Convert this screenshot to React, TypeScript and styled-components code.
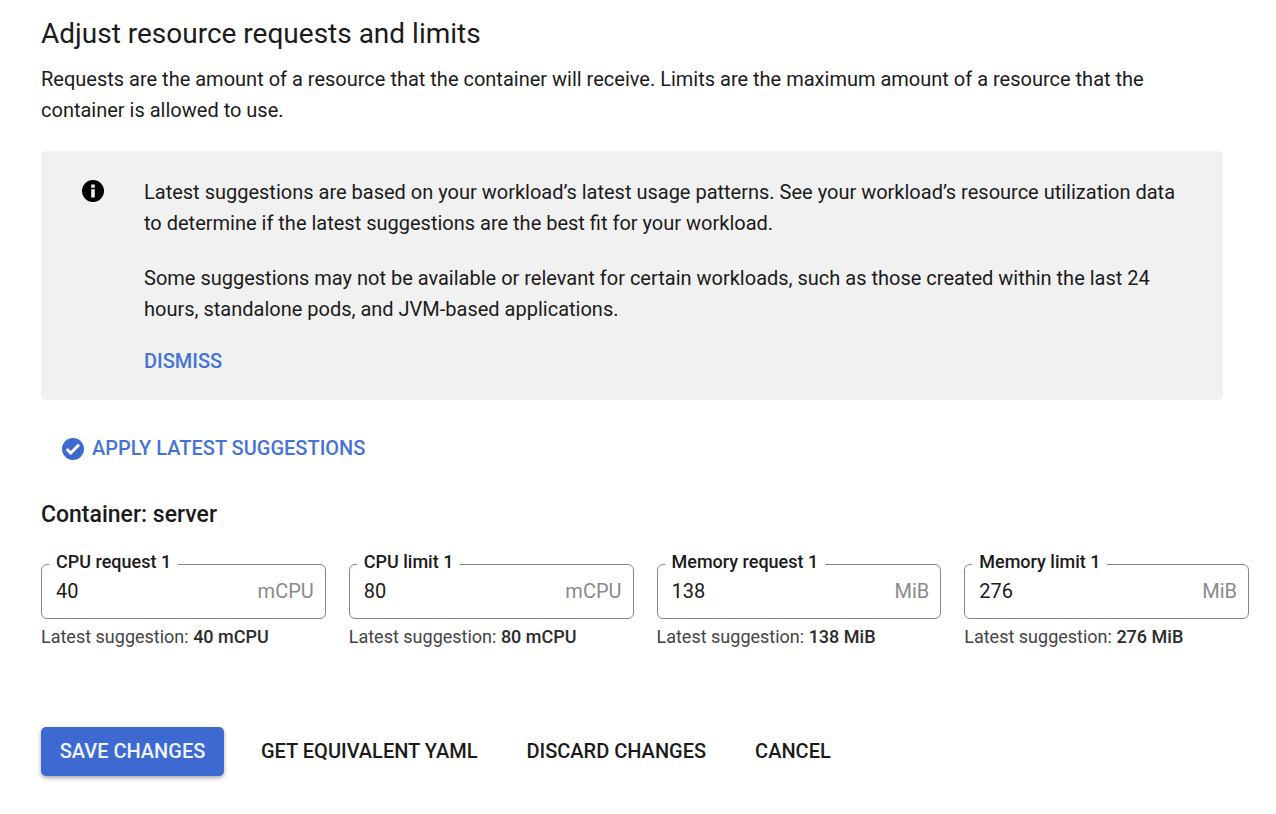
import React, { useId } from "react";
import styled, { createGlobalStyle } from "styled-components";

const GlobalStyle = createGlobalStyle`
  *, *::before, *::after { box-sizing: border-box; }
  body {
    margin: 0;
    background: #ffffff;
    color: #1b1b1b;
    font-family: Roboto, "Liberation Sans", sans-serif;
    font-size: 20px;
    line-height: 31px;
  }
`;

const blue = "#3d69d0";

const Page = styled.main`
  padding: 16px 27px 38px 41px;
`;

const Intro = styled.section`
  padding-right: 26px;
`;

const Title = styled.h1`
  margin: 0 0 12px;
  font-size: 28px;
  font-weight: 400;
  line-height: 36px;
`;

const Description = styled.p`
  margin: 0;
`;

const Notice = styled.aside`
  display: flex;
  align-items: flex-start;
  margin-top: 25px;
  padding: 26px 41px 23px;
  border-radius: 5px;
  background: #f1f1f1;
`;

const NoticeIcon = styled.svg`
  flex: none;
  width: 22px;
  height: 22px;
  margin: 3px 40px 0 0;
`;

const NoticeBody = styled.div`
  flex: 1;
`;

const NoticeText = styled.p`
  margin: 0 0 24px;

  &:last-of-type {
    margin-bottom: 21px;
  }
`;

const TextButton = styled.button<{ $primary?: boolean }>`
  display: inline-flex;
  align-items: center;
  gap: 8px;
  padding: 0;
  border: 0;
  background: none;
  color: ${(p) => (p.$primary ? "#4673d6" : "#1b1b1b")};
  font: inherit;
  font-weight: 500;
  cursor: pointer;
`;

const ApplyRow = styled.div`
  display: flex;
  margin: 33px 0 0 21px;
`;

const CheckIcon = styled.svg`
  width: 22px;
  height: 22px;
`;

const ContainerTitle = styled.h2`
  margin: 35px 0 22px;
  font-size: 23px;
  font-weight: 500;
  line-height: 31px;
`;

const Fields = styled.div`
  display: grid;
  grid-template-columns: repeat(4, minmax(0, 1fr));
  gap: 23px;
`;

const Outline = styled.fieldset`
  display: flex;
  min-width: 0;
  margin: 0;
  padding: 0 11px 11px 7px;
  border: 1px solid #80868b;
  border-radius: 6px;
`;

const Legend = styled.legend`
  padding: 0 7px 4px;
  font-size: 18px;
  font-weight: 500;
  line-height: 20px;
`;

const Row = styled.div`
  display: flex;
  flex: 1;
  align-items: center;
  min-width: 0;
  padding-left: 7px;
`;

const Input = styled.input`
  flex: 1;
  min-width: 0;
  width: 100%;
  height: 30px;
  padding: 0;
  border: 0;
  outline: 0;
  background: none;
  color: inherit;
  font: inherit;
`;

const Unit = styled.span`
  color: #8a8a8a;
`;

const Hint = styled.p`
  margin: 7px 0 0;
  color: #444444;
  font-size: 18px;
  line-height: 22px;

  strong {
    color: #2b2b2b;
    font-weight: 500;
  }
`;

const Actions = styled.footer`
  display: flex;
  align-items: center;
  gap: 49px;
  margin-top: 79px;
`;

const SaveButton = styled.button`
  min-width: 183px;
  height: 49px;
  margin-right: -12px;
  padding: 0 18px;
  border: 0;
  border-radius: 5px;
  background: ${blue};
  box-shadow: 0 2px 4px rgba(0, 0, 0, 0.35);
  color: #f0f4ff;
  font: inherit;
  font-weight: 500;
  cursor: pointer;
`;

interface FieldProps {
  label: string;
  value: number;
  unit: string;
}

function ResourceField({ label, value, unit }: FieldProps) {
  const id = useId();
  return (
    <div>
      <Outline>
        <Legend>
          <label htmlFor={id}>{label}</label>
        </Legend>
        <Row>
          <Input id={id} type="text" inputMode="numeric" defaultValue={value} />
          <Unit>{unit}</Unit>
        </Row>
      </Outline>
      <Hint>
        Latest suggestion: <strong>{value} {unit}</strong>
      </Hint>
    </div>
  );
}

const fields: FieldProps[] = [
  { label: "CPU request 1", value: 40, unit: "mCPU" },
  { label: "CPU limit 1", value: 80, unit: "mCPU" },
  { label: "Memory request 1", value: 138, unit: "MiB" },
  { label: "Memory limit 1", value: 276, unit: "MiB" },
];

export default function App() {
  return (
    <Page>
      <GlobalStyle />
      <Intro>
        <Title>Adjust resource requests and limits</Title>
        <Description>
          Requests are the amount of a resource that the container will receive. Limits are the
          maximum amount of a resource that the container is allowed to use.
        </Description>
        <Notice>
          <NoticeIcon viewBox="0 0 22 22" aria-hidden="true">
            <circle cx="11" cy="11" r="11" fill="#000" />
            <path d="M9.2 4.6h3.6v3.2H9.2zM9.2 9.2h3.6v8.2H9.2z" fill="#f1f1f1" />
          </NoticeIcon>
          <NoticeBody>
            <NoticeText>
              Latest suggestions are based on your workload’s latest usage patterns. See your
              workload’s resource utilization data to determine if the latest suggestions are the
              best fit for your workload.
            </NoticeText>
            <NoticeText>
              Some suggestions may not be available or relevant for certain workloads, such as those
              created within the last 24 hours, standalone pods, and JVM-based applications.
            </NoticeText>
            <TextButton type="button" $primary>DISMISS</TextButton>
          </NoticeBody>
        </Notice>
      </Intro>
      <ApplyRow>
        <TextButton type="button" $primary>
          <CheckIcon viewBox="0 0 22 22" aria-hidden="true">
            <circle cx="11" cy="11" r="11" fill={blue} />
            <path d="M4.8 11.2l4 3.8 8.2-8.2" fill="none" stroke="#fff" strokeWidth="3" />
          </CheckIcon>
          APPLY LATEST SUGGESTIONS
        </TextButton>
      </ApplyRow>
      <ContainerTitle>Container: server</ContainerTitle>
      <Fields>
        {fields.map((field) => (
          <ResourceField key={field.label} {...field} />
        ))}
      </Fields>
      <Actions>
        <SaveButton type="button">SAVE CHANGES</SaveButton>
        <TextButton type="button">GET EQUIVALENT YAML</TextButton>
        <TextButton type="button">DISCARD CHANGES</TextButton>
        <TextButton type="button">CANCEL</TextButton>
      </Actions>
    </Page>
  );
}
